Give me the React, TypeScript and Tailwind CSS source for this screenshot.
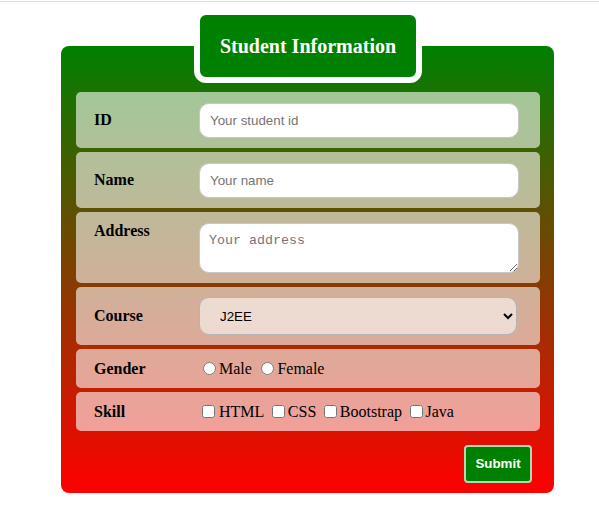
export default function App() {
  return (
    <div className="min-h-[524px] bg-white font-['Liberation_Serif',serif] text-black">
      <div className="mt-[1px] h-[1px] bg-[#e0e0e0]" />
      <form onSubmit={(e) => e.preventDefault()}>
        <fieldset className="ml-[61px] mt-[7px] w-[493px] rounded-[8px] bg-[linear-gradient(to_bottom,#008000,#ff0000)] pb-[10px] pl-[15px] pr-[14px] pt-[9px]">
          <legend className="mx-auto rounded-[12px] border-[6px] border-white bg-[#008000] px-[20px] py-[19px] text-[20px] font-bold leading-[24px] text-white">
            Student Information
          </legend>

          <div className="flex flex-col gap-[4px]">
            <div className="flex h-[56px] items-center rounded-[5px] bg-white/60 pl-[18px]">
              <label htmlFor="sid" className="w-[105px] text-[16px] font-bold">ID</label>
              <input
                id="sid"
                type="text"
                placeholder="Your student id"
                className="h-[35px] w-[320px] rounded-[10px] border border-[#c8c8c8] bg-white pl-[10px] font-['Liberation_Sans',Arial,sans-serif] text-[13.33px] placeholder:text-[#757575]"
              />
            </div>

            <div className="flex h-[56px] items-center rounded-[5px] bg-white/60 pl-[18px]">
              <label htmlFor="sname" className="w-[105px] text-[16px] font-bold">Name</label>
              <input
                id="sname"
                type="text"
                placeholder="Your name"
                className="h-[35px] w-[320px] rounded-[10px] border border-[#c8c8c8] bg-white pl-[10px] font-['Liberation_Sans',Arial,sans-serif] text-[13.33px] placeholder:text-[#757575]"
              />
            </div>

            <div className="flex items-start rounded-[5px] bg-white/60 pb-[10px] pl-[18px] pt-[11px]">
              <label htmlFor="saddr" className="-mt-[4px] w-[105px] text-[16px] font-bold">Address</label>
              <textarea
                id="saddr"
                placeholder="Your address"
                className="block h-[50px] w-[320px] rounded-[10px] border border-[#c8c8c8] bg-white pl-[9px] pr-[10px] pt-[7px] font-['Liberation_Mono',monospace] text-[13.33px] placeholder:text-[#757575]"
              />
            </div>

            <div className="flex h-[58px] items-center rounded-[5px] bg-white/60 pl-[18px]">
              <label htmlFor="scourse" className="w-[105px] text-[16px] font-bold">Course</label>
              <select
                id="scourse"
                defaultValue="J2EE"
                className="h-[38px] w-[318px] rounded-[10px] border border-[#b4b4b4] bg-white/55 pl-[16px] pr-[7px] font-['Liberation_Sans',Arial,sans-serif] text-[13.33px]"
              >
                <option>J2EE</option>
                <option>Python</option>
                <option>PHP</option>
                <option>.NET</option>
              </select>
            </div>

            <div className="flex h-[39px] items-center rounded-[5px] bg-white/60 pl-[18px]">
              <span className="w-[105px] text-[16px] font-bold">Gender</span>
              <div className="flex items-center text-[16px]">
                <input id="male" type="radio" name="gender" className="ml-[4px] mr-[3px] h-[13px] w-[13px]" />
                <label htmlFor="male">Male</label>
                <input id="female" type="radio" name="gender" className="ml-[9.5px] mr-[3px] h-[13px] w-[13px]" />
                <label htmlFor="female">Female</label>
              </div>
            </div>

            <div className="flex h-[39px] items-center rounded-[5px] bg-white/60 pl-[18px]">
              <span className="w-[105px] text-[16px] font-bold">Skill</span>
              <div className="flex items-center text-[16px]">
                <input id="html" type="checkbox" className="ml-[3px] mr-[4px] h-[13px] w-[13px]" />
                <label htmlFor="html">HTML</label>
                <input id="css" type="checkbox" className="ml-[7.5px] mr-[3px] h-[13px] w-[13px]" />
                <label htmlFor="css">CSS</label>
                <input id="bootstrap" type="checkbox" className="ml-[7.5px] mr-[3px] h-[13px] w-[13px]" />
                <label htmlFor="bootstrap">Bootstrap</label>
                <input id="java" type="checkbox" className="ml-[7.5px] mr-[3px] h-[13px] w-[13px]" />
                <label htmlFor="java">Java</label>
              </div>
            </div>
          </div>

          <div className="mr-[8px] mt-[14px] flex justify-end">
            <button
              type="submit"
              className="h-[38px] w-[68px] rounded-[4px] border-2 border-white/70 bg-[#008000] font-['Liberation_Sans',Arial,sans-serif] text-[13.33px] font-bold text-white"
            >
              Submit
            </button>
          </div>
        </fieldset>
      </form>
    </div>
  );
}
